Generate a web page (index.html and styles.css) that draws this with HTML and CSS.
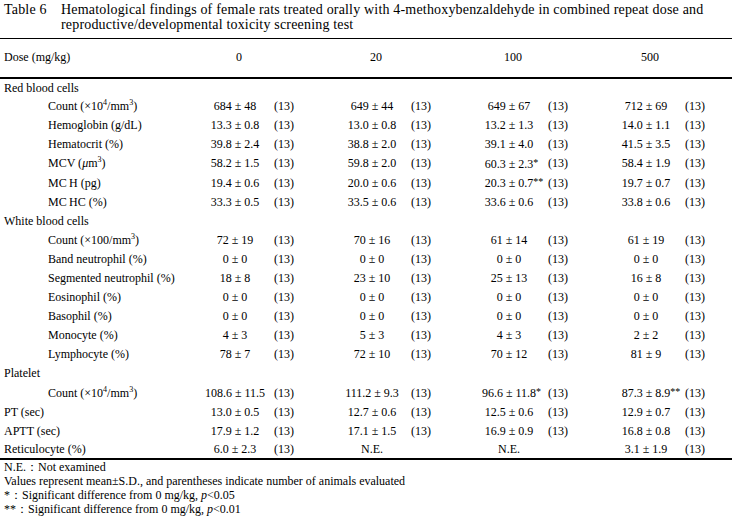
FILE: index.html
```html
<!DOCTYPE html>
<html lang="en">
<head>
<meta charset="utf-8">
<title>Table 6</title>
<link rel="stylesheet" href="styles.css">
</head>
<body>
<div class="page">
  <div class="caption">
    <div class="cap-num">Table 6</div>
    <div class="cap-text">Hematological findings of female rats treated orally with 4-methoxybenzaldehyde in combined repeat dose and reproductive/developmental toxicity screening test</div>
  </div>
  <table class="data">
    <colgroup>
      <col class="c-label"><col class="c-val"><col class="c-par"><col class="c-val"><col class="c-par"><col class="c-val"><col class="c-par"><col class="c-val"><col class="c-par-last">
    </colgroup>
    <thead>
      <tr>
        <th class="lab">Dose (mg/kg)</th>
        <th class="hv">0</th><th></th>
        <th class="hv">20</th><th></th>
        <th class="hv">100</th><th></th>
        <th class="hv">500</th><th></th>
      </tr>
    </thead>
    <tbody>
      <tr><td class="cat" colspan="9">Red blood cells</td></tr>
      <tr><td class="sub">Count (×10<sup>4</sup>/mm<sup>3</sup>)</td><td class="v">684 ± 48</td><td class="p">(13)</td><td class="v">649 ± 44</td><td class="p">(13)</td><td class="v">649 ± 67</td><td class="p">(13)</td><td class="v">712 ± 69</td><td class="p">(13)</td></tr>
      <tr><td class="sub">Hemoglobin (g/dL)</td><td class="v">13.3 ± 0.8</td><td class="p">(13)</td><td class="v">13.0 ± 0.8</td><td class="p">(13)</td><td class="v">13.2 ± 1.3</td><td class="p">(13)</td><td class="v">14.0 ± 1.1</td><td class="p">(13)</td></tr>
      <tr><td class="sub">Hematocrit (%)</td><td class="v">39.8 ± 2.4</td><td class="p">(13)</td><td class="v">38.8 ± 2.0</td><td class="p">(13)</td><td class="v">39.1 ± 4.0</td><td class="p">(13)</td><td class="v">41.5 ± 3.5</td><td class="p">(13)</td></tr>
      <tr><td class="sub">MCV (<i>μ</i>m<sup>3</sup>)</td><td class="v">58.2 ± 1.5</td><td class="p">(13)</td><td class="v">59.8 ± 2.0</td><td class="p">(13)</td><td class="v">60.3 ± 2.3<span class="sig">*</span></td><td class="p">(13)</td><td class="v">58.4 ± 1.9</td><td class="p">(13)</td></tr>
      <tr><td class="sub">MC&#8201;H (pg)</td><td class="v">19.4 ± 0.6</td><td class="p">(13)</td><td class="v">20.0 ± 0.6</td><td class="p">(13)</td><td class="v">20.3 ± 0.7<span class="sig">**</span></td><td class="p">(13)</td><td class="v">19.7 ± 0.7</td><td class="p">(13)</td></tr>
      <tr><td class="sub">MC&#8201;HC (%)</td><td class="v">33.3 ± 0.5</td><td class="p">(13)</td><td class="v">33.5 ± 0.6</td><td class="p">(13)</td><td class="v">33.6 ± 0.6</td><td class="p">(13)</td><td class="v">33.8 ± 0.6</td><td class="p">(13)</td></tr>
      <tr><td class="cat" colspan="9">White blood cells</td></tr>
      <tr><td class="sub">Count (×100/mm<sup>3</sup>)</td><td class="v">72 ± 19</td><td class="p">(13)</td><td class="v">70 ± 16</td><td class="p">(13)</td><td class="v">61 ± 14</td><td class="p">(13)</td><td class="v">61 ± 19</td><td class="p">(13)</td></tr>
      <tr><td class="sub">Band neutrophil (%)</td><td class="v">0 ± 0</td><td class="p">(13)</td><td class="v">0 ± 0</td><td class="p">(13)</td><td class="v">0 ± 0</td><td class="p">(13)</td><td class="v">0 ± 0</td><td class="p">(13)</td></tr>
      <tr><td class="sub">Segmented neutrophil (%)</td><td class="v">18 ± 8</td><td class="p">(13)</td><td class="v">23 ± 10</td><td class="p">(13)</td><td class="v">25 ± 13</td><td class="p">(13)</td><td class="v">16 ± 8</td><td class="p">(13)</td></tr>
      <tr><td class="sub">Eosinophil (%)</td><td class="v">0 ± 0</td><td class="p">(13)</td><td class="v">0 ± 0</td><td class="p">(13)</td><td class="v">0 ± 0</td><td class="p">(13)</td><td class="v">0 ± 0</td><td class="p">(13)</td></tr>
      <tr><td class="sub">Basophil (%)</td><td class="v">0 ± 0</td><td class="p">(13)</td><td class="v">0 ± 0</td><td class="p">(13)</td><td class="v">0 ± 0</td><td class="p">(13)</td><td class="v">0 ± 0</td><td class="p">(13)</td></tr>
      <tr><td class="sub">Monocyte (%)</td><td class="v">4 ± 3</td><td class="p">(13)</td><td class="v">5 ± 3</td><td class="p">(13)</td><td class="v">4 ± 3</td><td class="p">(13)</td><td class="v">2 ± 2</td><td class="p">(13)</td></tr>
      <tr><td class="sub">Lymphocyte (%)</td><td class="v">78 ± 7</td><td class="p">(13)</td><td class="v">72 ± 10</td><td class="p">(13)</td><td class="v">70 ± 12</td><td class="p">(13)</td><td class="v">81 ± 9</td><td class="p">(13)</td></tr>
      <tr><td class="cat" colspan="9">Platelet</td></tr>
      <tr><td class="sub">Count (×10<sup>4</sup>/mm<sup>3</sup>)</td><td class="v">108.6 ± 11.5</td><td class="p">(13)</td><td class="v">111.2 ± 9.3</td><td class="p">(13)</td><td class="v">96.6 ± 11.8<span class="sig">*</span></td><td class="p">(13)</td><td class="v">87.3 ± 8.9<span class="sig">**</span></td><td class="p">(13)</td></tr>
      <tr><td class="cat">PT (sec)</td><td class="v">13.0 ± 0.5</td><td class="p">(13)</td><td class="v">12.7 ± 0.6</td><td class="p">(13)</td><td class="v">12.5 ± 0.6</td><td class="p">(13)</td><td class="v">12.9 ± 0.7</td><td class="p">(13)</td></tr>
      <tr><td class="cat">APTT (sec)</td><td class="v">17.9 ± 1.2</td><td class="p">(13)</td><td class="v">17.1 ± 1.5</td><td class="p">(13)</td><td class="v">16.9 ± 0.9</td><td class="p">(13)</td><td class="v">16.8 ± 0.8</td><td class="p">(13)</td></tr>
      <tr class="last"><td class="cat">Reticulocyte (%)</td><td class="v">6.0 ± 2.3</td><td class="p">(13)</td><td class="v">N.E.</td><td class="p"></td><td class="v">N.E.</td><td class="p"></td><td class="v">3.1 ± 1.9</td><td class="p">(13)</td></tr>
    </tbody>
  </table>
  <div class="notes">
    <div>N.E.：Not examined</div>
    <div>Values represent mean±S.D., and parentheses indicate number of animals evaluated</div>
    <div>*：Significant difference from 0 mg/kg, <i>p</i>&lt;0.05</div>
    <div>**：Significant difference from 0 mg/kg, <i>p</i>&lt;0.01</div>
  </div>
</div>
</body>
</html>
```
FILE: styles.css
```css
html, body {
  margin: 0;
  padding: 0;
  background: #fff;
}
body {
  font-family: "Liberation Serif", "Times New Roman", serif;
  color: #000;
  width: 732px;
  height: 516px;
  overflow: hidden;
}
.page {
  display: flex;
  flex-direction: column;
}
.caption {
  display: flex;
  font-size: 14px;
  line-height: 15px;
  padding-top: 2px;
  letter-spacing: 0.18px;
}
.cap-num {
  width: 57px;
  padding-left: 4px;
  flex: none;
}
.cap-text {
  flex: 1;
  padding-right: 8px;
}
.data {
  margin-top: 6px;
  width: 732px;
  table-layout: fixed;
  border-collapse: collapse;
  font-size: 12px;
}
.c-label { width: 198px; }
.c-val { width: 74px; }
.c-par { width: 63px; }
.c-par-last { width: 49px; }
.data thead tr {
  height: 39px;
  border-top: 1px solid #000;
  border-bottom: 2px solid #000;
}
.data th {
  font-weight: normal;
  padding: 0;
  text-align: left;
  white-space: nowrap;
}
.data th.lab { padding-left: 4px; }
.data th.hv { text-align: center; padding-left: 8px; }
.data tbody tr { height: 19.1px; }
.data tbody tr.last { border-bottom: 2px solid #000; }
.data td {
  padding: 0;
  white-space: nowrap;
  line-height: 14px;
}
.data td.cat { padding-left: 4px; }
.data td.sub { padding-left: 48px; }
.data td.v { text-align: center; }
.data td.p { padding-left: 2px; }
.sig {
  display: inline-block;
  width: 0;
  overflow: visible;
  font-size: 10px;
  vertical-align: 2px;
}
sup {
  font-size: 8px;
  line-height: 0;
  vertical-align: 5px;
}
.notes {
  font-size: 12px;
  line-height: 14px;
  padding-left: 4px;
}
```
